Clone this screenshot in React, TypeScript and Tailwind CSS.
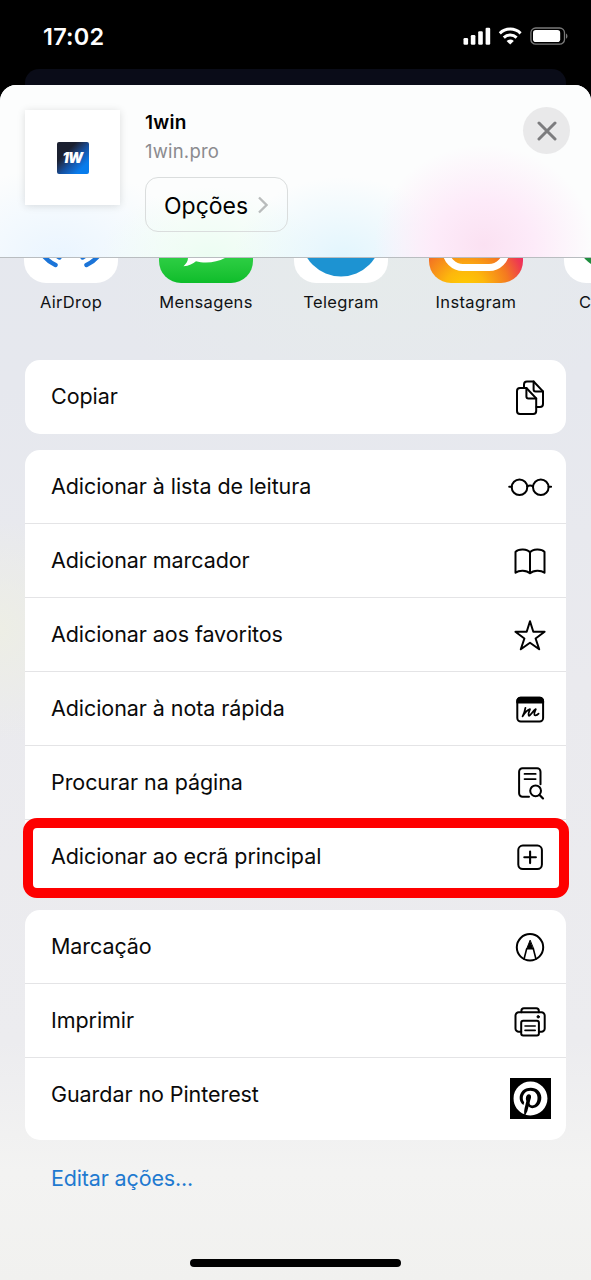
import type { ReactNode } from 'react';
import { FaPinterest } from 'react-icons/fa';

const Icon = ({ children }: { children: ReactNode }) => (
  <svg
    width="44"
    height="44"
    viewBox="0 0 44 44"
    fill="none"
    stroke="#000"
    strokeWidth="2"
    strokeLinecap="round"
    strokeLinejoin="round"
    className="shrink-0 overflow-visible"
  >
    {children}
  </svg>
);

const CopyIcon = () => (
  <Icon>
    <path d="M16 13V9.5a3 3 0 0 1 3-3h6.6L35 16.4V29a3 3 0 0 1-3 3h-3.5" />
    <path d="M25.6 6.5v7.9a2 2 0 0 0 2 2H35" />
    <path d="M18.4 13H12a3 3 0 0 0-3 3v20a3 3 0 0 0 3 3h13.2a3 3 0 0 0 3-3V23.4L18.4 13z" />
    <path d="M18.4 13v8.4a2 2 0 0 0 2 2h7.8" />
  </Icon>
);

const GlassesIcon = () => (
  <Icon>
    <circle cx="11.5" cy="22.2" r="7.8" />
    <circle cx="32.8" cy="22.2" r="7.8" />
    <path d="M19.2 21.4c1.6-.9 4.2-.9 5.8 0M1.2 21.8h2.5M40.6 21.8h2.5" />
  </Icon>
);

const BookIcon = () => (
  <Icon>
    <path d="M22 13.4C19.5 9.6 10.5 9.4 7.5 12.8v21c3.6-2.9 11-2.9 14.5.6 3.5-3.5 10.9-3.5 14.5-.6v-21C33.5 9.4 24.5 9.6 22 13.4v20.8" />
  </Icon>
);

const StarIcon = () => (
  <Icon>
    <path d="M22 8.2l3.3 10.5 11.3.1-9 6.7 3.6 10.8L22 29.7l-9.2 6.6 3.6-10.8-9-6.7 11.3-.1z" />
  </Icon>
);

const NoteIcon = () => (
  <Icon>
    <rect x="9.3" y="10.8" width="25.8" height="23.8" rx="3.5" />
    <path d="M9.3 15.6V14a3.2 3.2 0 0 1 3.2-3.2h19.4a3.2 3.2 0 0 1 3.2 3.2v1.6z" fill="#000" />
    <path d="M17.4 20.8c-.5 3-1.500 6-2.800 8.600 1.800-3 4.300-6.200 7.400-7.200-.8 2.200-2.400 5.600-1 6.600 2-.5 3.700-4.900 6.800-6.700-.8 2-2.400 5.300-1 6.100 1.300.4 2.700-.3 3.800-1.600" strokeWidth="1.8" />
  </Icon>
);

const FindIcon = () => (
  <Icon>
    <path d="M21 35.7h-6.5a3.4 3.4 0 0 1-3.4-3.4V10.7a3.4 3.4 0 0 1 3.4-3.4h14.6a3.4 3.4 0 0 1 3.4 3.4v12.5" />
    <path d="M16.5 12.9h11.2M16.5 18.1h11.2" strokeWidth="1.7" />
    <circle cx="27.6" cy="29.8" r="5.4" />
    <path d="M31.6 33.9l3.4 3.5" strokeWidth="2.2" />
  </Icon>
);

const PlusSquareIcon = () => (
  <Icon>
    <rect x="10.3" y="10.6" width="23.6" height="23.4" rx="4.5" />
    <path d="M22.1 16.5v11.6M16.3 22.3h11.6" strokeWidth="2.1" />
  </Icon>
);

const MarkupIcon = () => (
  <Icon>
    <circle cx="22" cy="22.3" r="13.2" />
    <path d="M18.6 24L16 34.3M25.4 24L28 34.3" strokeWidth="1.6" />
    <path d="M22 15.5L18.6 24h6.8z" fill="#000" strokeWidth="1" />
  </Icon>
);

const PrinterIcon = () => (
  <Icon>
    <path d="M13.4 13.3v-1.6a2.5 2.5 0 0 1 2.5-2.5h12.4a2.5 2.5 0 0 1 2.5 2.5v1.6" />
    <path d="M13.2 32.7h-2.4a3.3 3.3 0 0 1-3.3-3.3V16.6a3.3 3.3 0 0 1 3.3-3.3h22.6a3.3 3.3 0 0 1 3.3 3.3v12.8a3.3 3.3 0 0 1-3.3 3.3H31" />
    <rect x="13.2" y="21.8" width="17.7" height="14.7" rx="2" />
    <path d="M17 27h10.2M17 31.4h10.2" strokeWidth="1.6" />
    <circle cx="30.2" cy="17.8" r="1.2" fill="#000" strokeWidth="1" />
  </Icon>
);

const PinterestIcon = () => (
  <div className="mt-2 mr-[1.5px] flex size-[41px] shrink-0 items-center justify-center bg-black text-white">
    <FaPinterest size={35} />
  </div>
);

type Action = { label: string; icon: ReactNode; highlighted?: boolean; tall?: boolean };

const groups: Action[][] = [
  [{ label: 'Copiar', icon: <CopyIcon /> }],
  [
    { label: 'Adicionar à lista de leitura', icon: <GlassesIcon /> },
    { label: 'Adicionar marcador', icon: <BookIcon /> },
    { label: 'Adicionar aos favoritos', icon: <StarIcon /> },
    { label: 'Adicionar à nota rápida', icon: <NoteIcon /> },
    { label: 'Procurar na página', icon: <FindIcon /> },
    { label: 'Adicionar ao ecrã principal', icon: <PlusSquareIcon />, highlighted: true },
  ],
  [
    { label: 'Marcação', icon: <MarkupIcon /> },
    { label: 'Imprimir', icon: <PrinterIcon /> },
    { label: 'Guardar no Pinterest', icon: <PinterestIcon />, tall: true },
  ],
];

const apps = [
  {
    label: 'AirDrop',
    bg: 'bg-white',
    art: (
      <g fill="none" stroke="#1b74d8" strokeWidth="4.5" strokeLinecap="round">
        <path d="M17 63q5 8.500 14.500 13M77 63q-5 8.500-14.500 13" />
        <path d="M28 61q3 5 7.500 7.500M66 61q-3 5-7.500 7.500" />
      </g>
    ),
  },
  {
    label: 'Mensagens',
    bg: 'bg-linear-to-b from-[#5bf675] from-10% to-[#0cbd2a]',
    art: (
      <path d="M47 13c20 0 36 13 36 30S67 73.500 47 73.500c-4 0-7-.3-10-1.200-3 2.700-7 4.600-12.500 4.900 2.700-2.500 4.300-5 4.500-8C18 63 11 54 11 43c0-17 16-30 36-30z" fill="#fff" />
    ),
  },
  {
    label: 'Telegram',
    bg: 'bg-white',
    art: <circle cx="47" cy="47.5" r="40" fill="#1d93d2" />,
  },
  {
    label: 'Instagram',
    bg: 'bg-[radial-gradient(circle_at_38%_108%,#ffd000_0%,#fdb70c_18%,#f47a20_38%,#ee3a50_52%,#f20c86_68%,#c020b0_100%)]',
    art: <rect x="17" y="17" width="60" height="61.5" rx="17" fill="none" stroke="#fff" strokeWidth="7" />,
  },
  {
    label: 'Chrome',
    bg: 'bg-white',
    art: <circle cx="47" cy="45" r="36" fill="#1e8e3e" />,
  },
];

function StatusBar() {
  return (
    <div className="flex h-[69px] shrink-0 items-start justify-between pt-[22px] pr-[22px] pl-[43px]">
      <span className="text-[23.5px] leading-[30px] font-semibold tracking-[0.2px] text-white">17:02</span>
      <svg width="107" height="20" viewBox="0 0 107 20" fill="#fff" className="mt-1">
        <rect x="1.5" y="12" width="4.6" height="6.7" rx="1.2" />
        <rect x="8.8" y="9" width="4.6" height="9.7" rx="1.2" />
        <rect x="16.2" y="5.3" width="4.6" height="13.4" rx="1.2" />
        <rect x="23.6" y="1.7" width="4.6" height="17" rx="1.2" />
        <g fill="none" stroke="#fff" strokeWidth="3">
          <path d="M37.8 7.3a15 15 0 0 1 20.8 0" />
          <path d="M41.8 11.6a9.3 9.3 0 0 1 12.8 0" />
        </g>
        <path d="M48.2 18.6l-3.6-3.7a5.2 5.2 0 0 1 7.2 0z" />
        <rect x="68.9" y="2" width="33.6" height="16.2" rx="4.8" fill="none" stroke="#7a7a7a" strokeWidth="1.3" />
        <rect x="71" y="4.1" width="27.2" height="12" rx="2.8" />
        <path d="M104 7.5c1.8.7 2 4.5 0 5.3z" fill="#7a7a7a" />
      </svg>
    </div>
  );
}

function SheetHeader() {
  return (
    <header className="flex h-[173px] shrink-0 items-start rounded-t-2xl border-b border-[#b9bdc0] bg-[#fcfdfd] bg-[radial-gradient(ellipse_110px_100px_at_484px_160px,#fbe1f2_0%,#fdebf9_45%,transparent_100%),radial-gradient(ellipse_110px_80px_at_343px_172px,#e2f5fd_0%,transparent_100%),radial-gradient(ellipse_110px_70px_at_210px_172px,#ecfdf2_0%,transparent_100%),radial-gradient(ellipse_130px_90px_at_60px_172px,#eaf5ff_0%,transparent_100%)] pt-[25px] pr-[21px] pl-[25px]">
      <div className="flex size-[95px] items-center justify-center bg-white shadow-[0_1px_8px_rgba(0,0,0,0.13)]">
        <div className="flex size-8 items-center justify-center rounded-xs bg-linear-135 from-[#1b2030] from-30% via-[#1450a0] via-55% to-[#087cec] to-80%">
          <span className="text-[14px] leading-none font-black tracking-[-0.8px] text-white italic">1W</span>
        </div>
      </div>
      <div className="ml-[25px] flex flex-col items-start">
        <h1 className="mt-px text-[19px] leading-6 font-semibold tracking-[0.3px] text-black">1win</h1>
        <p className="mt-1 text-[18.5px] leading-6 tracking-[0.2px] text-[#8b8b8f]">1win.pro</p>
        <button className="mt-3.5 flex h-[55px] w-[143px] items-center rounded-[13px] border-[1.5px] border-[#dadddd] pt-[3px] pl-[18px] text-[23px] text-black">
          Opções
          <svg width="10" height="18" viewBox="0 0 10 18" fill="none" stroke="#b9bcbc" strokeWidth="2.3" className="mb-0.5 ml-[10px]">
            <path d="M1 1.5L8.5 9 1 16.5" />
          </svg>
        </button>
      </div>
      <button className="-mt-[3px] ml-auto flex size-[47px] items-center justify-center rounded-full bg-[#e9e9ea]">
        <svg width="20" height="20" viewBox="0 0 20 20" stroke="#7c7c7e" strokeWidth="3" strokeLinecap="round">
          <path d="M2 2l16 16M18 2L2 18" />
        </svg>
      </button>
    </header>
  );
}

function AppRow() {
  return (
    <div className="shrink-0 overflow-hidden">
      <div className="flex h-[25px] w-max items-end gap-[41px] pl-6">
        {apps.map((app) => (
          <div key={app.label} className={`size-[94px] shrink-0 overflow-hidden rounded-[22px] ${app.bg}`}>
            <svg width="94" height="94" viewBox="0 0 94 94">
              {app.art}
            </svg>
          </div>
        ))}
      </div>
      <div className="mt-2 flex w-max gap-[15px] pl-[11px]">
        {apps.map((app) => (
          <span key={app.label} className="w-[120px] text-center text-[16.5px] leading-[22px] tracking-[0.35px] text-[#101214]">
            {app.label}
          </span>
        ))}
      </div>
    </div>
  );
}

function ActionRow({ action }: { action: Action }) {
  return (
    <li className={`relative flex items-center justify-between pr-[14px] pl-[26px] ${action.tall ? 'h-[82px] pb-2' : 'h-[74px]'}`}>
      <span className="text-[21.5px] tracking-[-0.07px] text-[#0a0a0a]">{action.label}</span>
      {action.icon}
      {action.highlighted && (
        <div className="absolute -top-[1.5px] -right-[3px] -left-0.5 h-20 rounded-[14px] border-[10px] border-[#fe0000]" />
      )}
    </li>
  );
}

export default function App() {
  return (
    <div className="flex h-[1280px] w-[591px] flex-col overflow-hidden bg-black font-[Inter,'Liberation_Sans',sans-serif]">
      <StatusBar />
      <div className="mx-[25px] h-4 shrink-0 rounded-t-[14px] bg-[#0a0c18]" />
      <main className="flex grow flex-col rounded-t-2xl bg-[#eeeeef] bg-[radial-gradient(ellipse_90px_110px_at_0px_545px,#edeee5_0%,transparent_100%),radial-gradient(ellipse_260px_160px_at_370px_190px,#e6ebeb_0%,transparent_100%),linear-gradient(to_bottom,#e5e8ee_0%,#e6e8ee_25%,#eaeaee_50%,#ececef_80%,#f3f3f2_91%,#f1f1ef_100%)]">
        <SheetHeader />
        <AppRow />
        <div className="mx-[25px] mt-[46.5px] flex flex-col gap-4">
          {groups.map((group) => (
            <ul key={group[0].label} className="rounded-[15px] bg-white">
              {group.map((action, i) => (
                <div key={action.label} className={i > 0 ? 'shadow-[0_-1px_0_#e4e4e6]' : ''}>
                  <ActionRow action={action} />
                </div>
              ))}
            </ul>
          ))}
        </div>
        <a className="mt-[24.5px] ml-[51px] text-[21.5px] leading-7 tracking-[-0.15px] text-[#1f7ad0]">Editar ações...</a>
        <div className="mx-auto mt-auto mb-[13px] h-2 w-[211px] rounded-full bg-black" />
      </main>
    </div>
  );
}
